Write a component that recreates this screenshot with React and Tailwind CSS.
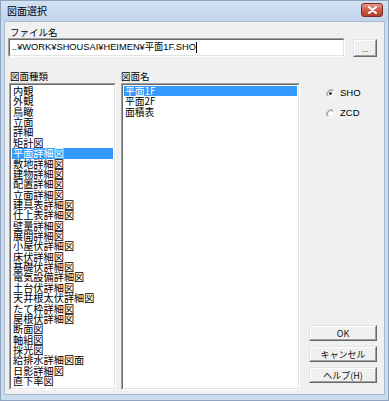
import React from "react";

const FONT = { fontFamily: '"Liberation Sans", "Noto Sans CJK JP", sans-serif' };
const JP = { fontFamily: '"Noto Sans CJK JP", "Liberation Sans", sans-serif' };

const kinds = [
  "内観", "外観", "鳥瞰", "立面", "詳細", "矩計図", "平面詳細図", "敷地詳細図",
  "建物詳細図", "配置詳細図", "立面詳細図", "建具表詳細図", "仕上表詳細図",
  "壁量詳細図", "展開詳細図", "小屋伏詳細図", "床伏詳細図", "基礎伏詳細図",
  "電気設備詳細図", "土台伏詳細図", "天井根太伏詳細図", "たて枠詳細図",
  "屋根伏詳細図", "断面図", "軸組図", "採光図", "給排水詳細図面", "日影詳細図",
  "直下率図",
];

const names = ["平面1F", "平面2F", "面積表"];

function Sunken({ className = "", children }) {
  return (
    <div className={"border border-t-[#a0a0a0] border-l-[#a0a0a0] border-b-white border-r-white " + className}>
      <div className="h-full w-full border border-t-[#696969] border-l-[#696969] border-b-[#e3e3e3] border-r-[#e3e3e3] bg-white overflow-hidden">
        {children}
      </div>
    </div>
  );
}

function Raised({ className = "", children }) {
  return (
    <div className={"border border-t-[#e3e3e3] border-l-[#e3e3e3] border-b-[#696969] border-r-[#696969] " + className}>
      <div className="h-full w-full border border-t-white border-l-white border-b-[#a0a0a0] border-r-[#a0a0a0] bg-[#f0f0f0] flex items-center justify-center text-[9px] leading-none text-[#111]">
        {children}
      </div>
    </div>
  );
}

function Radio({ checked, label }) {
  return (
    <div className="flex items-center gap-[5px] h-[10px]">
      <svg width="9" height="9" viewBox="0 0 12 12">
        <path d="M10.2 1.8 A6 6 0 0 0 1.8 10.2" fill="none" stroke="#a0a0a0" strokeWidth="1" />
        <path d="M1.8 10.2 A6 6 0 0 0 10.2 1.8" fill="none" stroke="#ffffff" strokeWidth="1" />
        <circle cx="6" cy="6" r="4.5" fill="#ffffff" stroke="#e3e3e3" strokeWidth="0.6" />
        <path d="M9.2 2.8 A4.6 4.6 0 0 0 2.8 9.2" fill="none" stroke="#696969" strokeWidth="1" />
        {checked && <circle cx="6" cy="6" r="1.8" fill="#000" />}
      </svg>
      <span className="text-[9.5px] leading-[10px] text-black" style={FONT}>{label}</span>
    </div>
  );
}

export default function App() {
  return (
    <div className="w-[389px] h-[401px] bg-[#cbdcef] flex flex-col border border-[#8fa5bf]" style={JP}>
      {/* Title bar */}
      <div className="h-[20px] flex items-center justify-between pl-[6px] pr-[5px] bg-gradient-to-b from-[#d3e1f2] to-[#c2d4ea]">
        <span className="text-[10px] text-black leading-none">図面選択</span>
        <div className="w-[22px] h-[14px] rounded-[3px] border border-[#7d2a22] bg-gradient-to-b from-[#e19b8d] via-[#cc5a48] to-[#b83c2c] flex items-center justify-center mt-[-2px]">
          <svg width="9" height="8" viewBox="0 0 9 8">
            <path d="M1 1 L8 7 M8 1 L1 7" stroke="#ffffff" strokeWidth="2" strokeLinecap="round" />
          </svg>
        </div>
      </div>

      {/* Client area */}
      <div className="flex-1 mx-[3px] mb-[5px] bg-[#f0f0f0] border border-[#a9bbd0] flex flex-col">
        <div className="mt-[5px] ml-[5px] text-[9.5px] leading-[10px] text-black">ファイル名</div>

        <div className="flex items-start mt-[1px] ml-[3px]">
          <Sunken className="w-[337px] h-[19px]">
            <div className="flex items-center h-full pl-[2px] text-[9.3px] text-black" style={FONT}>
              <span>..¥WORK¥SHOUSAI¥HEIMEN¥平面1F.SHO</span>
              <span className="w-px h-[11px] bg-black" />
            </div>
          </Sunken>
          <Raised className="w-[24px] h-[18px] ml-[8px] mt-[1px]">
            <span className="text-[8px] leading-none text-[#555] mt-[2px]">...</span>
          </Raised>
        </div>

        <div className="flex mt-[14px] text-[9.5px] leading-[10px] text-black">
          <span className="ml-[5px] w-[111px]">図面種類</span>
          <span>図面名</span>
        </div>

        <div className="flex mt-[2px] h-[307px]">
          <Sunken className="ml-[4px] w-[107px] h-full">
            <div className="pt-[1px] px-px">
              {kinds.map((k, i) => (
                <div
                  key={k}
                  className={
                    "h-[10.36px] leading-[10.36px] text-[10.2px] pl-px whitespace-nowrap " +
                    (i === 6 ? "bg-[#3399ff] text-white" : "text-black")
                  }
                >
                  {k}
                </div>
              ))}
            </div>
          </Sunken>

          <Sunken className="ml-[5px] w-[179px] h-full">
            <div className="pt-[1px] px-px">
              {names.map((n, i) => (
                <div
                  key={n}
                  className={
                    "h-[10.4px] leading-[10.4px] text-[9.8px] pl-px whitespace-nowrap " +
                    (i === 0 ? "bg-[#3399ff] text-white" : "text-black")
                  }
                >
                  {n}
                </div>
              ))}
            </div>
          </Sunken>

          <div className="flex-1 flex flex-col justify-between pb-[7px]">
            <div className="flex flex-col gap-[10px] ml-[26px] mt-[5px]">
              <Radio checked label="SHO" />
              <Radio label="ZCD" />
            </div>
            <div className="flex flex-col gap-[5px] ml-[9px]">
              <Raised className="w-[68px] h-[16px]">OK</Raised>
              <Raised className="w-[68px] h-[16px]">キャンセル</Raised>
              <Raised className="w-[68px] h-[16px]">ヘルプ(H)</Raised>
            </div>
          </div>
        </div>
      </div>
    </div>
  );
}
